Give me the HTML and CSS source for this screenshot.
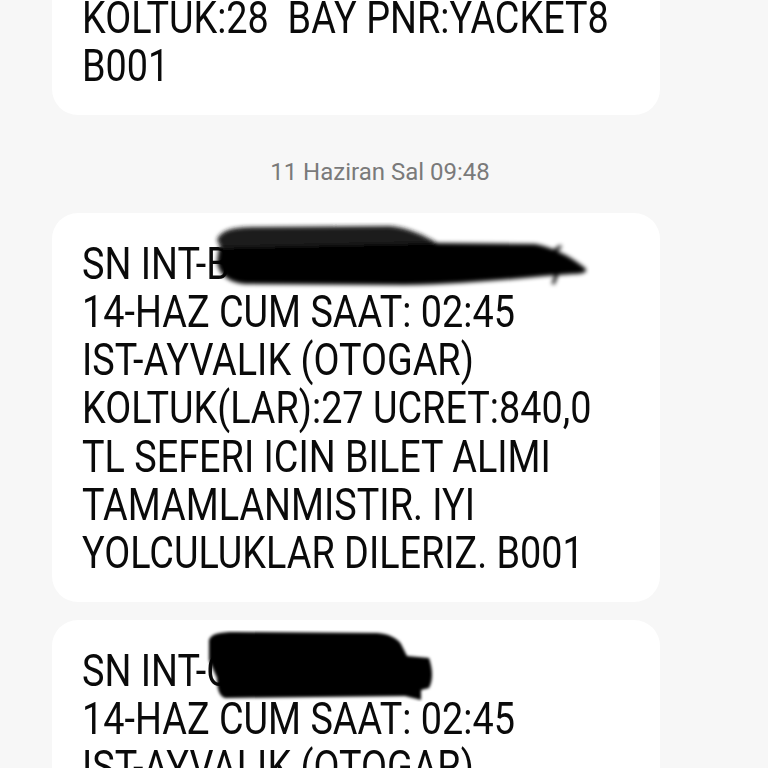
FILE: index.html
```html
<!DOCTYPE html>
<html lang="tr">
<head>
<meta charset="utf-8">
<link rel="stylesheet" href="styles.css">
</head>
<body>
<div class="thread">
  <div class="bubble">
    <p class="msg">KOLTUK:28&nbsp; BAY PNR:YACKET8<br>B001</p>
  </div>
  <div class="stamp">11 Haziran Sal 09:48</div>
  <div class="bubble">
    <p class="msg">SN INT-B<br>14-HAZ CUM SAAT: 02:45<br>IST-AYVALIK (OTOGAR)<br>KOLTUK(LAR):27 UCRET:840,0<br>TL SEFERI ICIN BILET ALIMI<br>TAMAMLANMISTIR. IYI<br>YOLCULUKLAR DILERIZ. B001</p>
    <svg class="scrib scrib1" viewBox="0 0 385 70" width="385" height="70" aria-hidden="true">
      <defs><filter id="bl1" x="-10%" y="-30%" width="120%" height="160%"><feGaussianBlur stdDeviation="2"/></filter></defs>
      <g filter="url(#bl1)">
        <path fill="#1a1a1a" d="M12 18 C16 8 28 5 50 5 L185 4 C205 6 220 14 232 21 L240 30 L20 34 Z"/>
        <path fill="#040404" d="M14 26 L232 21 L330 22 C350 26 368 36 380 46 C384 50 378 52 368 52 L340 54 C300 58 250 62 200 63 L40 62 C20 60 14 50 12 40 Z"/>
        <path d="M348 30 L356 24 M352 52 L348 62" stroke="#040404" stroke-width="3" fill="none"/>
      </g>
    </svg>
  </div>
  <div class="bubble">
    <p class="msg">SN INT-C<br>14-HAZ CUM SAAT: 02:45<br>IST-AYVALIK (OTOGAR)</p>
    <svg class="scrib scrib2" viewBox="0 0 230 72" width="230" height="72" aria-hidden="true">
      <defs><filter id="bl2" x="-10%" y="-20%" width="120%" height="140%"><feGaussianBlur stdDeviation="1.5"/></filter></defs>
      <g filter="url(#bl2)" fill="#030303">
        <path d="M4 10 C6 4 14 2 30 2 L172 3 C184 4 192 8 196 14 L202 26 L224 28 C228 40 228 50 224 58 L216 60 L216 70 L200 66 L20 68 C14 66 12 58 12 48 L4 30 Z"/>
      </g>
    </svg>
  </div>
</div>
</body>
</html>
```
FILE: styles.css
```css
html, body {
  margin: 0;
  padding: 0;
  background: #f7f7f7;
  overflow: hidden;
}
body {
  width: 768px;
  height: 768px;
  font-family: Roboto, "Noto Sans", sans-serif;
}
.thread {
  display: flex;
  flex-direction: column;
  margin-top: -33px;
}
.bubble {
  position: relative;
  background: #ffffff;
  border-radius: 26px;
  margin: 0 108px 0 52px;
  padding: 27px 30px 24px;
}
.bubble + .bubble {
  margin-top: 18px;
}
.msg {
  margin: 0;
  font-size: 45px;
  line-height: 48.3px;
  color: #0a0a0a;
  white-space: nowrap;
  transform: scaleX(0.84);
  transform-origin: left center;
}
.stamp {
  text-align: center;
  font-size: 24px;
  color: #7a7a7a;
  line-height: 28px;
  padding: 43px 8px 0 0;
  height: 55px;
}
.scrib {
  position: absolute;
}
.scrib1 {
  left: 153px;
  top: 9px;
}
.scrib2 {
  left: 153px;
  top: 10px;
}
```
